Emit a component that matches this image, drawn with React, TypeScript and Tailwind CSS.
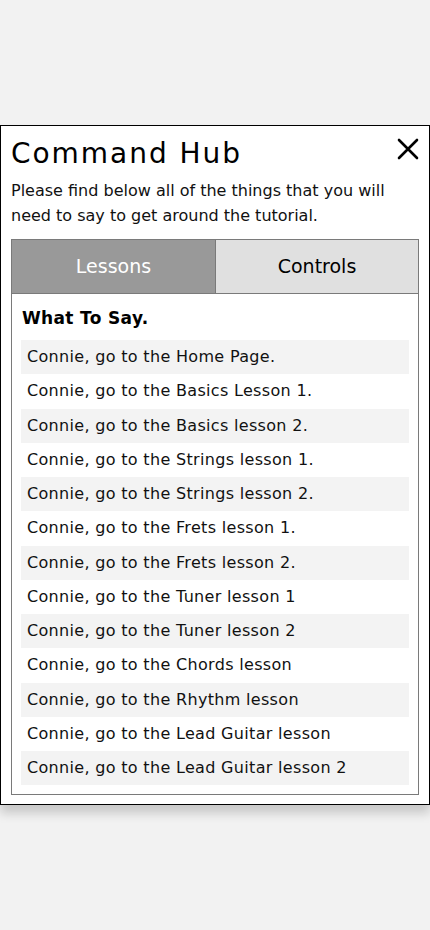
import React, { useState } from 'react';

const commands = [
  'Connie, go to the Home Page.',
  'Connie, go to the Basics Lesson 1.',
  'Connie, go to the Basics lesson 2.',
  'Connie, go to the Strings lesson 1.',
  'Connie, go to the Strings lesson 2.',
  'Connie, go to the Frets lesson 1.',
  'Connie, go to the Frets lesson 2.',
  'Connie, go to the Tuner lesson 1',
  'Connie, go to the Tuner lesson 2',
  'Connie, go to the Chords lesson',
  'Connie, go to the Rhythm lesson',
  'Connie, go to the Lead Guitar lesson',
  'Connie, go to the Lead Guitar lesson 2',
];

export default function App() {
  const [tab, setTab] = useState<'lessons' | 'controls'>('lessons');

  return (
    <div
      className="min-h-[930px] w-[430px] bg-[#f2f2f2] pt-[125px]"
      style={{ fontFamily: '"DejaVu Sans", sans-serif' }}
    >
      <div className="border border-black bg-white px-[10px] pb-[9px] shadow-[0_8px_10px_rgba(0,0,0,0.18)]">
        <header className="flex items-start justify-between pt-[9px]">
          <h1 className="text-[28px] leading-[38px] tracking-[0.07em] text-black">Command Hub</h1>
          <button className="mt-[2px] mr-[-1px]" aria-label="close">
            <svg width="24" height="24" viewBox="0 0 24 24" fill="none" stroke="black" strokeWidth="2.6" strokeLinecap="round">
              <path d="M3 3 L21 21 M21 3 L3 21" />
            </svg>
          </button>
        </header>
        <p className="mt-[5px] text-[16px] leading-[25px] text-[#111]">
          Please find below all of the things that you will need to say to get around the tutorial.
        </p>

        <div className="mt-[11px] border border-[#7a7a7a]">
          <div className="grid grid-cols-2 h-[54px] border-b border-[#7a7a7a]">
            <button
              onClick={() => setTab('lessons')}
              className={
                tab === 'lessons'
                  ? 'bg-[#999999] text-white text-[19px] font-medium'
                  : 'bg-[#e0e0e0] text-black text-[19px] font-medium'
              }
            >
              Lessons
            </button>
            <button
              onClick={() => setTab('controls')}
              className={
                tab === 'controls'
                  ? 'bg-[#999999] text-white text-[19px] font-medium border-l border-[#7a7a7a]'
                  : 'bg-[#e0e0e0] text-black text-[19px] font-medium border-l border-[#7a7a7a]'
              }
            >
              Controls
            </button>
          </div>

          <div className="px-[9px] pt-[12px] pb-[9px]">
            <h2 className="text-[17px] font-bold leading-[24px] pl-[1px] tracking-[0.02em]">What To Say.</h2>
            <ul className="mt-[10px]">
              {commands.map((c, i) => (
                <li
                  key={c}
                  className={
                    (i % 2 === 0 ? 'bg-[#f3f3f3] ' : 'bg-white ') +
                    'h-[34.25px] flex items-center pl-[6px] text-[16px] tracking-[0.02em] text-[#111]'
                  }
                >
                  {c}
                </li>
              ))}
            </ul>
          </div>
        </div>
      </div>
    </div>
  );
}
